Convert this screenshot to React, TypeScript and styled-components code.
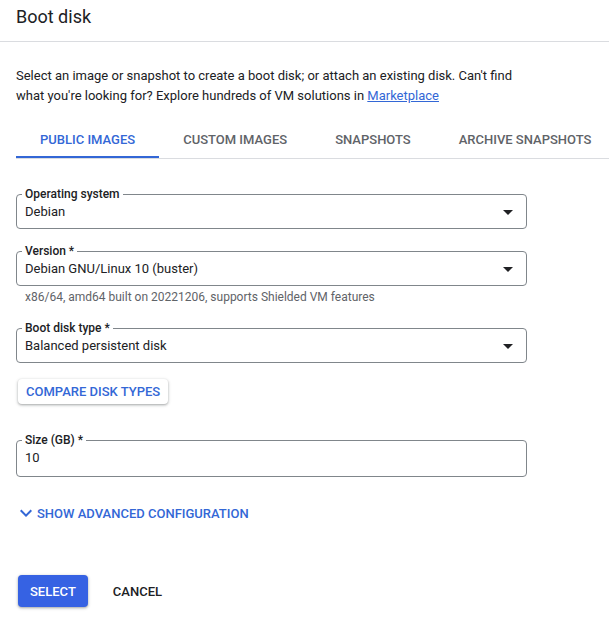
import React, { useState } from "react";
import styled, { createGlobalStyle } from "styled-components";

const GlobalStyle = createGlobalStyle`
  html, body {
    margin: 0;
    padding: 0;
    background: #ffffff;
  }
  body {
    font-family: Roboto, "Liberation Sans", Arial, sans-serif;
    color: #202124;
    -webkit-font-smoothing: antialiased;
  }
`;

const BLUE = "#3367d6";

const Panel = styled.div`
  width: 609px;
  min-height: 627px;
  background: #fff;
`;

const Header = styled.header`
  height: 42px;
  box-sizing: border-box;
  padding: 5px 16px 0;
  border-bottom: 1px solid #dadce0;
`;

const Title = styled.h1`
  margin: 0;
  font-size: 18px;
  line-height: 24px;
  font-weight: 400;
  color: #202124;
`;

const Content = styled.div`
  padding: 0 0 0 16px;
`;

const Intro = styled.p`
  margin: 24px 0 0;
  max-width: 520px;
  font-size: 13px;
  line-height: 20px;
  color: #202124;
`;

const Link = styled.a`
  color: ${BLUE};
  text-decoration: underline;
`;

const TabBar = styled.div`
  display: flex;
  margin-top: 16px;
  border-bottom: 1px solid #dadce0;
  overflow: hidden;
`;

const Tab = styled.button<{ $active?: boolean }>`
  flex: none;
  height: 36px;
  padding: 1px 24px 0;
  border: 0;
  border-bottom: 2px solid ${(p) => (p.$active ? BLUE : "transparent")};
  background: none;
  font-family: inherit;
  font-size: 13px;
  font-weight: 500;
  text-transform: uppercase;
  color: ${(p) => (p.$active ? BLUE : "#5f6368")};
  cursor: pointer;
`;

const Form = styled.div`
  width: 511px;
  padding-top: 28px;
`;

const Field = styled.fieldset<{ $gap?: number; $tall?: boolean }>`
  margin: ${(p) => p.$gap ?? 0}px 0 0;
  padding: 0 13px ${(p) => (p.$tall ? 8 : 6)}px 8px;
  border: 1px solid #80868b;
  border-radius: 4px;
  min-width: 0;
`;

const Legend = styled.legend`
  margin-left: -3px;
  padding: 0 3px;
  font-size: 12px;
  line-height: 14px;
  font-weight: 500;
  color: #202124;
`;

const Control = styled.div`
  display: flex;
  align-items: center;
  justify-content: space-between;
  height: 20px;
  margin-top: 1px;
  font-size: 13px;
  line-height: 20px;
  color: #202124;
`;

const Hint = styled.div`
  margin: 3px 0 0 9px;
  font-size: 12px;
  line-height: 16px;
  color: #5f6368;
`;

const RaisedButton = styled.button`
  display: block;
  margin: 16px 0 0 2px;
  height: 25px;
  padding: 0 8px;
  border: 0;
  border-radius: 4px;
  background: #fff;
  box-shadow: 0 1px 2px rgba(60, 64, 67, 0.3), 0 1px 3px 1px rgba(60, 64, 67, 0.15);
  font-family: inherit;
  font-size: 13px;
  font-weight: 500;
  text-transform: uppercase;
  color: ${BLUE};
  cursor: pointer;
`;

const Expander = styled.button`
  display: flex;
  align-items: center;
  margin: 26px 0 0 2px;
  padding: 0;
  height: 20px;
  border: 0;
  background: none;
  font-family: inherit;
  font-size: 13px;
  font-weight: 500;
  text-transform: uppercase;
  color: ${BLUE};
  cursor: pointer;

  svg {
    margin: 0 -1px 0 -4px;
  }
`;

const Actions = styled.div`
  display: flex;
  align-items: center;
  gap: 13px;
  padding: 52px 0 0 18px;
`;

const ActionButton = styled.button<{ $primary?: boolean }>`
  height: 32px;
  padding: 0 12px;
  border: 0;
  border-radius: 4px;
  background: ${(p) => (p.$primary ? "#3662e3" : "transparent")};
  box-shadow: ${(p) =>
    p.$primary ? "0 1px 2px rgba(60,64,67,0.3), 0 1px 3px 1px rgba(60,64,67,0.15)" : "none"};
  font-family: inherit;
  font-size: 13px;
  font-weight: 500;
  text-transform: uppercase;
  color: ${(p) => (p.$primary ? "#fff" : "#202124")};
  cursor: pointer;
`;

const Caret = () => (
  <svg width="10" height="5" viewBox="0 0 10 5" aria-hidden>
    <path d="M0 0h10L5 5z" fill="#202124" />
  </svg>
);

const Chevron = () => (
  <svg width="24" height="24" viewBox="0 0 24 24" aria-hidden>
    <path d="M7.41 8.59 12 13.17l4.59-4.58L18 10l-6 6-6-6z" fill={BLUE} />
  </svg>
);

type SelectProps = { label: string; value: string; gap?: number };

const SelectField = ({ label, value, gap }: SelectProps) => (
  <Field $gap={gap}>
    <Legend>{label}</Legend>
    <Control>
      <span>{value}</span>
      <Caret />
    </Control>
  </Field>
);

const tabs = ["Public images", "Custom images", "Snapshots", "Archive snapshots"];

export default function App() {
  const [active, setActive] = useState(0);

  return (
    <Panel>
      <GlobalStyle />
      <Header>
        <Title>Boot disk</Title>
      </Header>
      <Content>
        <Intro>
          Select an image or snapshot to create a boot disk; or attach an existing disk. Can't find
          what you're looking for? Explore hundreds of VM solutions in <Link>Marketplace</Link>
        </Intro>
        <TabBar>
          {tabs.map((t, i) => (
            <Tab key={t} $active={i === active} onClick={() => setActive(i)}>
              {t}
            </Tab>
          ))}
        </TabBar>
        <Form>
          <SelectField label="Operating system" value="Debian" />
          <SelectField label="Version *" value="Debian GNU/Linux 10 (buster)" gap={15} />
          <Hint>x86/64, amd64 built on 20221206, supports Shielded VM features</Hint>
          <SelectField label="Boot disk type *" value="Balanced persistent disk" gap={16} />
          <RaisedButton>Compare disk types</RaisedButton>
          <Field $gap={29} $tall>
            <Legend>Size (GB) *</Legend>
            <Control>
              <span>10</span>
            </Control>
          </Field>
          <Expander>
            <Chevron />
            Show advanced configuration
          </Expander>
        </Form>
      </Content>
      <Actions>
        <ActionButton $primary>Select</ActionButton>
        <ActionButton>Cancel</ActionButton>
      </Actions>
    </Panel>
  );
}
